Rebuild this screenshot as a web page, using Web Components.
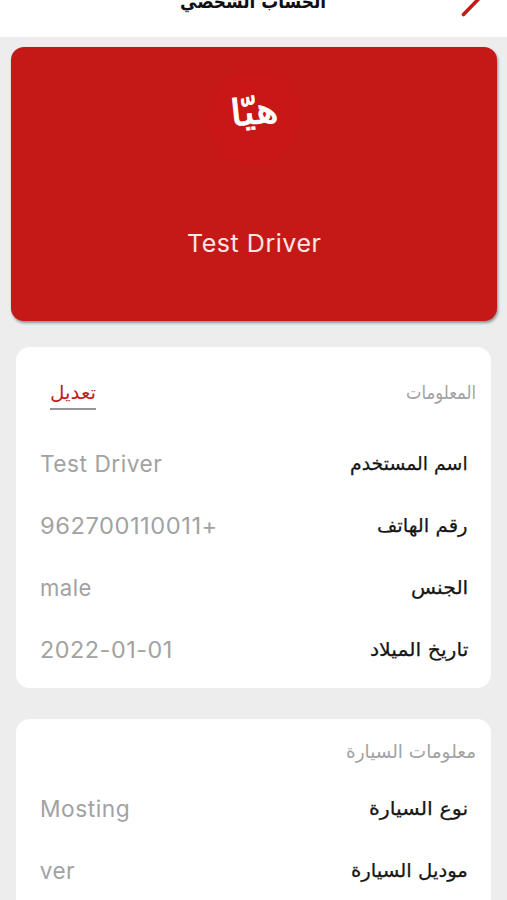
<!DOCTYPE html>
<html lang="ar" dir="rtl">
<head>
<meta charset="utf-8">
<title>الحساب الشخصي</title>
<style>
  body {
    margin: 0;
    height: 900px;
    overflow: hidden;
    background: #ededed;
    font-family: Inter, "DejaVu Sans", sans-serif;
  }
</style>
</head>
<body>
<profile-page></profile-page>

<script>
/**
 * Attaches an open shadow root with the given markup.
 *
 * @param {HTMLElement} element the host element.
 * @param {string} html the styles and markup of the shadow tree.
 */
function attachTemplate(element, html) {
  const template = document.createElement('template');
  template.innerHTML = html;
  element.attachShadow({ mode: 'open' })
    .appendChild(template.content.cloneNode(true));
}

customElements.define('fit-text',
  /**
   * Represents a single line of text set to a fixed width.
   */
  class extends HTMLElement {
    constructor() {
      super();
      attachTemplate(this, `
<style>
  :host { display: block; flex: none; white-space: nowrap; }
  span { display: inline-block; transform-origin: 100% 50%; }
</style>
<span><slot></slot></span>
`);
    }

    /**
     * Called after the element is inserted into the DOM.
     */
    connectedCallback() {
      const span = this.shadowRoot.querySelector('span');
      const width = Number(this.getAttribute('width'));
      this.style.width = `${width}px`;
      span.style.transform = `scaleX(${width / span.offsetWidth})`;
    }
  }
);

customElements.define('profile-header',
  /**
   * Represents the navigation bar, scrolled partly out of view.
   */
  class extends HTMLElement {
    constructor() {
      super();
      attachTemplate(this, `
<style>
  :host {
    display: grid;
    grid-template-columns: 60px 1fr 60px;
    align-items: center;
    height: 76px;
    margin-top: -39px;
    background: #fff;
  }
  .title {
    display: flex;
    justify-content: center;
    padding-top: 4px;
    font: bold 19px/28px "DejaVu Sans", sans-serif;
    color: #111;
  }
  svg { display: block; margin-right: 24px; }
</style>
<svg width="24" height="36" viewBox="0 0 24 36" fill="none" stroke="#c41a1b" stroke-width="3.6" stroke-linecap="round" stroke-linejoin="round">
  <path d="M4.500 1.500L20 17.500L4.500 33.500"/>
</svg>
<div class="title"><slot></slot></div>
`);
    }
  }
);

customElements.define('profile-card',
  /**
   * Represents the red card with the logo and the name of the driver.
   */
  class extends HTMLElement {
    constructor() {
      super();
      attachTemplate(this, `
<style>
  :host {
    display: flex;
    flex-direction: column;
    align-items: center;
    box-sizing: border-box;
    height: 274px;
    margin: 10px 10px 0 11px;
    padding-top: 23px;
    border-radius: 13px;
    background: #c51918;
    box-shadow: 1px 2px 3px rgba(0, 0, 0, .4);
  }
  .logo {
    display: flex;
    align-items: center;
    justify-content: center;
    width: 94px;
    height: 94px;
    border-radius: 50%;
    background: #c91617;
    color: #fff;
    font: 37px/50px "DejaVu Sans", sans-serif;
    -webkit-text-stroke: .8px #fff;
  }
  .logo fit-text { rotate: -6deg; margin-top: -10px; }
  .name {
    margin-top: 64px;
    font-size: 24.5px;
    line-height: 30px;
    letter-spacing: .5px;
    color: #fbe6e6;
  }
</style>
<div class="logo"><fit-text width="48">هيّا</fit-text></div>
<div class="name"><slot></slot></div>
`);
    }
  }
);

customElements.define('info-panel',
  /**
   * Represents a white panel with a title, an optional action and rows.
   */
  class extends HTMLElement {
    constructor() {
      super();
      attachTemplate(this, `
<style>
  :host {
    display: block;
    box-sizing: border-box;
    height: 341px;
    margin: 26px 16px 0;
    padding-top: var(--panel-top, 28px);
    border-radius: 14px;
    background: #fff;
  }
  header {
    display: flex;
    justify-content: space-between;
    align-items: flex-start;
    height: var(--title-height, 57px);
    padding: 0 15px 0 34px;
    font: 19px/34px "DejaVu Sans", sans-serif;
    color: #a3a3a3;
  }
  ::slotted([slot="action"]) {
    height: 33px;
    border-bottom: 2px solid #969696;
    color: #bf1d20;
  }
</style>
<header>
  <slot name="title"></slot>
  <slot name="action"></slot>
</header>
<slot></slot>
`);
    }
  }
);

customElements.define('info-row',
  /**
   * Represents a label with its value.
   */
  class extends HTMLElement {
    constructor() {
      super();
      attachTemplate(this, `
<style>
  :host {
    display: flex;
    justify-content: space-between;
    align-items: center;
    height: 62px;
    padding: 0 23px 0 24px;
    font-size: 22.5px;
    letter-spacing: .5px;
    color: #a2a2a2;
  }
  ::slotted([slot="label"]) {
    font: 19px/30px "DejaVu Sans", sans-serif;
    letter-spacing: 0;
    color: #161616;
    -webkit-text-stroke: .25px #161616;
  }
</style>
<slot name="label"></slot>
<slot></slot>
`);
    }
  }
);

customElements.define('profile-page',
  /**
   * Represents the account page of a driver.
   */
  class extends HTMLElement {
    constructor() {
      super();
      attachTemplate(this, `
<style>
  :host { display: flow-root; height: 900px; overflow: hidden; }
  .car {
    margin-top: 31px;
    --panel-top: 15px;
    --title-height: 43px;
  }
</style>
<profile-header><fit-text width="146">الحساب الشخصي</fit-text></profile-header>
<profile-card><fit-text width="135">Test Driver</fit-text></profile-card>
<info-panel>
  <fit-text slot="title" width="70">المعلومات</fit-text>
  <fit-text slot="action" width="46">تعديل</fit-text>
  <info-row><fit-text slot="label" width="118">اسم المستخدم</fit-text><fit-text width="122">Test Driver</fit-text></info-row>
  <info-row><fit-text slot="label" width="91">رقم الهاتف</fit-text><fit-text width="178">+962700110011</fit-text></info-row>
  <info-row><fit-text slot="label" width="57">الجنس</fit-text><fit-text width="52">male</fit-text></info-row>
  <info-row><fit-text slot="label" width="98">تاريخ الميلاد</fit-text><fit-text width="133"><bdi dir="ltr">2022-01-01</bdi></fit-text></info-row>
</info-panel>
<info-panel class="car">
  <fit-text slot="title" width="130">معلومات السيارة</fit-text>
  <info-row><fit-text slot="label" width="99">نوع السيارة</fit-text><fit-text width="90">Mosting</fit-text></info-row>
  <info-row><fit-text slot="label" width="117">موديل السيارة</fit-text><fit-text width="35">ver</fit-text></info-row>
</info-panel>
`);
    }
  }
);
</script>
</body>
</html>
